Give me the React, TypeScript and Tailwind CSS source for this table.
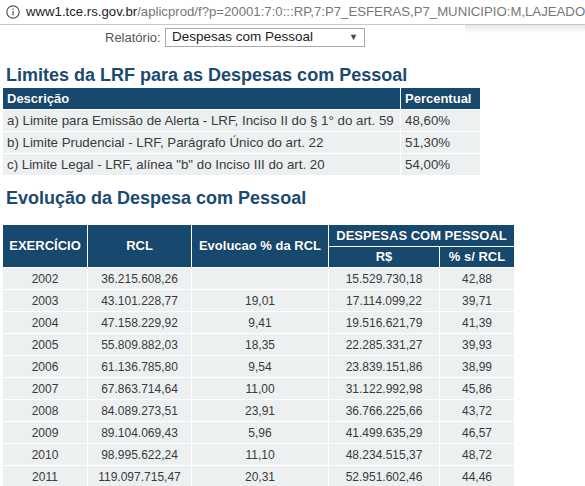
import React from "react";

const limites = [
  ["a) Limite para Emissão de Alerta - LRF, Inciso II do § 1° do art. 59", "48,60%"],
  ["b) Limite Prudencial - LRF, Parágrafo Único do art. 22", "51,30%"],
  ["c) Limite Legal - LRF, alínea \"b\" do Inciso III do art. 20", "54,00%"],
];

const evolucao = [
  ["2002", "36.215.608,26", "", "15.529.730,18", "42,88"],
  ["2003", "43.101.228,77", "19,01", "17.114.099,22", "39,71"],
  ["2004", "47.158.229,92", "9,41", "19.516.621,79", "41,39"],
  ["2005", "55.809.882,03", "18,35", "22.285.331,27", "39,93"],
  ["2006", "61.136.785,80", "9,54", "23.839.151,86", "38,99"],
  ["2007", "67.863.714,64", "11,00", "31.122.992,98", "45,86"],
  ["2008", "84.089.273,51", "23,91", "36.766.225,66", "43,72"],
  ["2009", "89.104.069,43", "5,96", "41.499.635,29", "46,57"],
  ["2010", "98.995.622,24", "11,10", "48.234.515,37", "48,72"],
  ["2011", "119.097.715,47", "20,31", "52.951.602,46", "44,46"],
];

const th = "bg-[#17486e] text-white font-bold text-[13px] border border-white [text-shadow:0_0_1px_rgba(0,0,0,0.4)]";
const td = "bg-[#edf0f1] text-[#3a3a3a] border border-white";

export default function App() {
  return (
    <div className="w-[585px] h-[486px] overflow-hidden bg-white font-['Liberation_Sans',Arial,sans-serif]">
      {/* barra de endereço */}
      <div className="relative h-[25px] flex items-center border-b border-[#c9c9c9] pl-[6px] text-[13.2px] whitespace-nowrap">
        <svg width="14" height="14" viewBox="0 0 14 14" className="mr-[6px] shrink-0">
          <circle cx="7" cy="7" r="6.2" fill="none" stroke="#555" strokeWidth="1.2" />
          <rect x="6.4" y="6" width="1.3" height="4.3" fill="#555" />
          <rect x="6.4" y="3.5" width="1.3" height="1.3" fill="#555" />
        </svg>
        <span className="text-[#222]">www1.tce.rs.gov.br</span>
        <span className="text-[#777]">/aplicprod/f?p=20001:7:0:::RP,7:P7_ESFERAS,P7_MUNICIPIO:M,LAJEADO</span>
        <div className="absolute right-0 top-[25px] w-[120px] h-[8px] bg-gradient-to-b from-[#e6e6e6] to-transparent" />
      </div>

      <div className="px-[2px]">
        <div className="flex items-center mt-[3px] h-[19px] text-[13px]">
          <span className="ml-[103px] w-[58px] text-[#555]">Relatório:</span>
          <div className="ml-[2px] w-[200px] h-[19px] border border-[#a9a9a9] flex items-center justify-between pl-[6px] pr-[6px] text-[13.5px] text-[#222]">
            <span>Despesas com Pessoal</span>
            <span className="text-[9px] text-[#444]">▼</span>
          </div>
        </div>

        <h2 className="mt-[17px] ml-[4px] text-[18px] leading-[22px] font-bold text-[#1b4a6f]">
          Limites da LRF para as Despesas com Pessoal
        </h2>
        <table className="mt-[1px] border-collapse text-[13.3px]">
          <thead>
            <tr className="h-[22px]">
              <th className={`${th} text-left pl-[4px] w-[398px]`}>Descrição</th>
              <th className={`${th} text-left px-[4px] w-[80px]`}>Percentual</th>
            </tr>
          </thead>
          <tbody>
            {limites.map((r) => (
              <tr key={r[0]} className="h-[22px]">
                <td className={`${td} pl-[4px]`}>{r[0]}</td>
                <td className={`${td} pl-[4px]`}>{r[1]}</td>
              </tr>
            ))}
          </tbody>
        </table>

        <h2 className="mt-[11px] ml-[4px] text-[18px] leading-[22px] font-bold text-[#1b4a6f]">
          Evolução da Despesa com Pessoal
        </h2>
        <table className="mt-[15px] border-collapse text-[12px] text-center">
          <thead>
            <tr className="h-[22px]">
              <th rowSpan={2} className={`${th} w-[85px]`}>EXERCÍCIO</th>
              <th rowSpan={2} className={`${th} w-[104px]`}>RCL</th>
              <th rowSpan={2} className={`${th} w-[137px]`}>Evolucao % da RCL</th>
              <th colSpan={2} className={th}>DESPESAS COM PESSOAL</th>
            </tr>
            <tr className="h-[21px]">
              <th className={`${th} w-[111px]`}>R$</th>
              <th className={`${th} w-[75px]`}>% s/ RCL</th>
            </tr>
          </thead>
          <tbody>
            {evolucao.map((r) => (
              <tr key={r[0]} className="h-[22px]">
                {r.map((c, i) => (
                  <td key={i} className={td}>{c}</td>
                ))}
              </tr>
            ))}
          </tbody>
        </table>
      </div>
    </div>
  );
}
